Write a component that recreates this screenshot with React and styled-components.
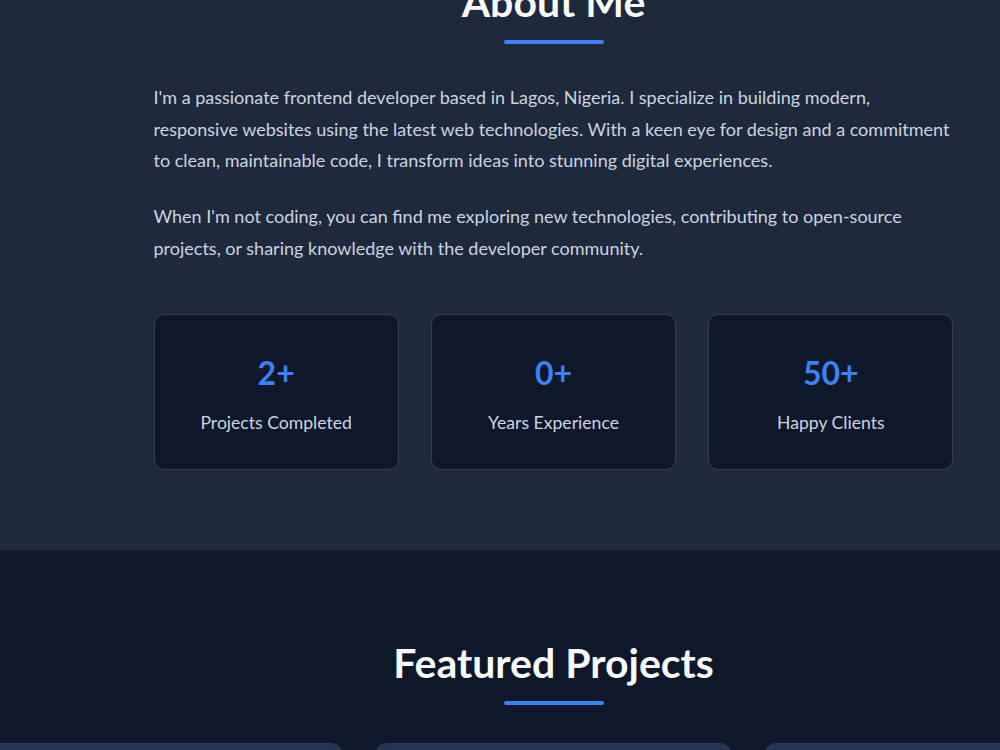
import styled, { createGlobalStyle } from "styled-components";
import { useLayoutEffect } from "react";

const stats = [
  { value: "2+", label: "Projects Completed" },
  { value: "0+", label: "Years Experience" },
  { value: "50+", label: "Happy Clients" },
];

const projects = [
  { title: "Portfolio Website", text: "Personal portfolio built with React." },
  { title: "E-commerce Store", text: "Online shop with cart and checkout." },
  { title: "Weather App", text: "Live forecasts from a public API." },
];

const App = () => {
  useLayoutEffect(() => {
    window.scrollTo(0, 110);
  }, []);

  return (
    <>
      <GlobalStyle />
      <Page>
        <AboutSection>
          <Container>
            <SectionTitle>About Me</SectionTitle>
            <TitleBar />
            <Text>
              I'm a passionate frontend developer based in Lagos, Nigeria. I
              specialize in building modern, responsive websites using the
              latest web technologies. With a keen eye for design and a
              commitment to clean, maintainable code, I transform ideas into
              stunning digital experiences.
            </Text>
            <Text>
              When I'm not coding, you can find me exploring new technologies,
              contributing to open-source projects, or sharing knowledge with
              the developer community.
            </Text>
            <StatsGrid>
              {stats.map(stat => (
                <StatCard key={stat.label}>
                  <StatValue>{stat.value}</StatValue>
                  <StatLabel>{stat.label}</StatLabel>
                </StatCard>
              ))}
            </StatsGrid>
          </Container>
        </AboutSection>
        <ProjectsSection>
          <SectionTitle>Featured Projects</SectionTitle>
          <TitleBar />
          <ProjectGrid>
            {projects.map(p => (
              <ProjectCard key={p.title}>
                <ProjectThumb />
                <ProjectBody>
                  <ProjectTitle>{p.title}</ProjectTitle>
                  <ProjectText>{p.text}</ProjectText>
                </ProjectBody>
              </ProjectCard>
            ))}
          </ProjectGrid>
        </ProjectsSection>
      </Page>
    </>
  );
};

export default App;

const GlobalStyle = createGlobalStyle`
  html, body {
    margin: 0;
    padding: 0;
    overflow: hidden;
    background: #0f172a;
  }
  body {
    font-family: Lato, "Noto Sans", sans-serif;
    line-height: 1.6;
    color: #e2e8f0;
  }
  * {
    box-sizing: border-box;
  }
`;

const Page = styled.div`
  width: 1107px;
`;

const AboutSection = styled.section`
  background: #1e293b;
  padding: 80px 0;
  border-bottom: 1px solid #172033;
`;

const Container = styled.div`
  max-width: 800px;
  margin: 0 auto;
`;

const SectionTitle = styled.h2`
  margin: 0;
  font-size: 41px;
  font-weight: 700;
  line-height: 64px;
  text-align: center;
  color: #f8fafc;
`;

const TitleBar = styled.div`
  width: 100px;
  height: 4px;
  margin: 6px auto 38px;
  border-radius: 2px;
  background: #3b82f6;
`;

const Text = styled.p`
  margin: 0 0 24px;
  font-size: 18px;
  line-height: 1.76;
  color: #cbd5e1;

  &:last-of-type {
    margin-bottom: 0;
  }
`;

const StatsGrid = styled.div`
  display: grid;
  grid-template-columns: repeat(3, 1fr);
  gap: 32px;
  margin-top: 50px;
`;

const StatCard = styled.div`
  padding: 32px 16px;
  text-align: center;
  background: #0f172a;
  border: 1px solid #334155;
  border-radius: 10px;
`;

const StatValue = styled.div`
  font-size: 32px;
  font-weight: 700;
  line-height: 1.6;
  color: #3b82f6;
`;

const StatLabel = styled.div`
  margin-top: 10px;
  font-size: 17.6px;
  color: #cbd5e1;
`;

const ProjectsSection = styled.section`
  padding: 80px 0;
  background: #0f172a;
`;

const ProjectGrid = styled.div`
  display: grid;
  grid-template-columns: repeat(3, 357px);
  gap: 32px;
  width: 1135px;
  margin-left: -14px;
`;

const ProjectCard = styled.div`
  background: #1e293b;
  border: 1px solid #2c3e5a;
  border-radius: 12px;
  overflow: hidden;
`;

const ProjectThumb = styled.div`
  height: 200px;
  background: #243452;
`;

const ProjectBody = styled.div`
  padding: 24px;
`;

const ProjectTitle = styled.h3`
  margin: 0 0 8px;
  font-size: 20px;
  color: #f8fafc;
`;

const ProjectText = styled.p`
  margin: 0;
  font-size: 16px;
  color: #94a3b8;
`;
